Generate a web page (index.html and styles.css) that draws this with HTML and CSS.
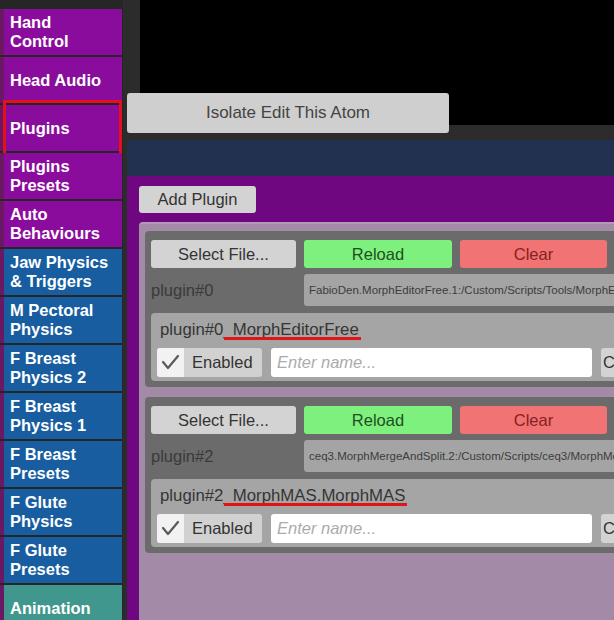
FILE: index.html
```html
<!DOCTYPE html>
<html>
<head>
<meta charset="utf-8">
<link rel="stylesheet" href="styles.css">
</head>
<body>
<div class="app">
  <nav class="sidebar">
    <div class="tab purple">Hand<br>Control</div>
    <div class="tab purple">Head Audio</div>
    <div class="tab purple selected">Plugins</div>
    <div class="tab purple">Plugins<br>Presets</div>
    <div class="tab purple">Auto<br>Behaviours</div>
    <div class="tab blue">Jaw Physics<br>&amp; Triggers</div>
    <div class="tab blue">M Pectoral<br>Physics</div>
    <div class="tab blue">F Breast<br>Physics 2</div>
    <div class="tab blue">F Breast<br>Physics 1</div>
    <div class="tab blue">F Breast<br>Presets</div>
    <div class="tab blue">F Glute<br>Physics</div>
    <div class="tab blue">F Glute<br>Presets</div>
    <div class="tab teal">Animation</div>
  </nav>
  <main class="main">
    <div class="viewport"></div>
    <button class="isolate">Isolate Edit This Atom</button>
    <div class="band"></div>
    <section class="plugins">
      <button class="btn add">Add Plugin</button>
      <div class="plugin-list">
        <div class="plugin">
          <div class="row1">
            <button class="btn select">Select File...</button>
            <button class="btn reload">Reload</button>
            <button class="btn clear">Clear</button>
          </div>
          <div class="row2">
            <div class="plabel">plugin#0</div>
            <div class="path">FabioDen.MorphEditorFree.1:/Custom/Scripts/Tools/MorphEditorFree/MorphEditorFree.cs</div>
          </div>
          <div class="inner">
            <div class="title">plugin#0<span class="mark">_MorphEditorFree</span></div>
            <div class="controls">
              <div class="toggle">
                <span class="check"><svg width="27" height="29" viewBox="0 0 27 29"><path d="M6 14 L11 20 L21 8" fill="none" stroke="#5a5a5a" stroke-width="2.2" stroke-linecap="round" stroke-linejoin="round"/></svg></span>
                <span class="tlabel">Enabled</span>
              </div>
              <div class="name-input">Enter name...</div>
              <button class="btn copy">Copy</button>
            </div>
          </div>
        </div>
        <div class="plugin">
          <div class="row1">
            <button class="btn select">Select File...</button>
            <button class="btn reload">Reload</button>
            <button class="btn clear">Clear</button>
          </div>
          <div class="row2">
            <div class="plabel">plugin#2</div>
            <div class="path">ceq3.MorphMergeAndSplit.2:/Custom/Scripts/ceq3/MorphMergeAndSplit/MorphMAS.cs</div>
          </div>
          <div class="inner">
            <div class="title">plugin#2<span class="mark">_MorphMAS.MorphMAS</span></div>
            <div class="controls">
              <div class="toggle">
                <span class="check"><svg width="27" height="29" viewBox="0 0 27 29"><path d="M6 14 L11 20 L21 8" fill="none" stroke="#5a5a5a" stroke-width="2.2" stroke-linecap="round" stroke-linejoin="round"/></svg></span>
                <span class="tlabel">Enabled</span>
              </div>
              <div class="name-input">Enter name...</div>
              <button class="btn copy">Copy</button>
            </div>
          </div>
        </div>
      </div>
    </section>
  </main>
</div>
</body>
</html>
```
FILE: styles.css
```css
* { box-sizing: border-box; }
html, body {
  margin: 0;
  padding: 0;
}
body {
  width: 614px;
  height: 620px;
  overflow: hidden;
  background: #2a2a2a;
  font-family: "Liberation Sans", Arial, sans-serif;
}
.app {
  display: flex;
  width: 614px;
  height: 620px;
}
.sidebar {
  width: 123px;
  flex: none;
  padding: 9px 1px 0 4px;
  background: #262626;
  display: flex;
  flex-direction: column;
  gap: 2px;
}
.tab {
  position: relative;
  height: 46px;
  flex: none;
  display: flex;
  align-items: center;
  padding-left: 6px;
  color: #fff;
  font-weight: bold;
  font-size: 16.5px;
  line-height: 19px;
  box-shadow: -4px 0 0 #6a1764;
}
.purple { background: #8a0c9c; }
.blue { background: #175d9f; }
.teal { background: #3f978d; }
.selected::after {
  content: "";
  position: absolute;
  left: -1px;
  top: -5px;
  width: 113px;
  height: 54px;
  border: 3px solid #e5101c;
}
.main {
  position: relative;
  flex: 1;
  display: flex;
  flex-direction: column;
  overflow: hidden;
  background: #2c2c2c;
}
.viewport {
  height: 125px;
  margin-left: 17px;
  background: #000;
  flex: none;
}
.isolate {
  position: absolute;
  left: 4px;
  top: 93px;
  width: 322px;
  height: 40px;
  border: 0;
  border-radius: 3px;
  background: #cfcfcf;
  color: #444;
  font-family: inherit;
  font-size: 17px;
  padding: 0;
}
.band {
  height: 36px;
  margin: 15px 0 0 4px;
  background: #22314f;
  flex: none;
}
.plugins {
  flex: 1;
  margin-left: 4px;
  background: #6f0880;
  padding: 10px 0 0 12px;
  display: flex;
  flex-direction: column;
}
.btn {
  border: 0;
  border-radius: 3px;
  background: #d3d3d3;
  color: #333;
  font-family: inherit;
  font-size: 16.5px;
  padding: 0;
}
.add {
  width: 117px;
  height: 27px;
  flex: none;
}
.plugin-list {
  flex: 1;
  margin-top: 9px;
  background: #a38ba7;
  border-radius: 4px 0 0 0;
  padding: 8px 0 0 6px;
  border-top: 2px solid #b29ab6;
}
.plugin {
  width: 540px;
  background: #6b6b6b;
  border-radius: 4px;
  padding: 9px 6px 6px;
  margin-bottom: 10px;
  margin-top: -1px;
}
.plugin + .plugin { margin-top: 0; }
.row1 {
  display: flex;
  gap: 8px;
  height: 28px;
}
.select { width: 145px; }
.reload { width: 148px; background: #7ef07e; color: #1f4f1f; }
.clear { width: 147px; background: #f17373; color: #862222; }
.row2 {
  display: flex;
  margin-top: 6px;
  height: 32px;
}
.plabel {
  width: 153px;
  flex: none;
  display: flex;
  align-items: center;
  color: #3a3a3a;
  font-size: 16.5px;
}
.path {
  flex: 1;
  background: #a4a4a4;
  border-radius: 3px;
  display: flex;
  align-items: center;
  padding-left: 5px;
  color: #3c3c3c;
  font-size: 11.5px;
  white-space: nowrap;
  overflow: hidden;
}
.inner {
  margin-top: 7px;
  height: 68px;
  background: #a5a5a5;
  border-radius: 4px;
  padding: 6px 0 4px 6px;
}
.title {
  line-height: 22px;
  font-size: 16.8px;
  color: #353535;
  padding-left: 3px;
  white-space: nowrap;
}
.mark {
  position: relative;
}
.mark::after {
  content: "";
  position: absolute;
  left: 1px;
  right: -2px;
  bottom: -1px;
  height: 3px;
  background: #e01414;
}
.controls {
  display: flex;
  margin-top: 7px;
  height: 29px;
  gap: 9px;
}
.toggle {
  width: 105px;
  flex: none;
  display: flex;
  background: #d1d1d1;
  border-radius: 3px;
  overflow: hidden;
}
.check {
  width: 27px;
  height: 29px;
  background: #f2f2f2;
  display: block;
}
.check svg { display: block; }
.tlabel {
  display: flex;
  align-items: center;
  padding-left: 8px;
  color: #333;
  font-size: 16.5px;
}
.name-input {
  width: 321px;
  flex: none;
  background: #fff;
  border-radius: 3px;
  display: flex;
  align-items: center;
  padding-left: 6px;
  font-style: italic;
  color: #ababab;
  font-size: 16.5px;
}
.copy {
  width: 60px;
  flex: none;
  text-align: left;
  padding-left: 2px;
}
```
